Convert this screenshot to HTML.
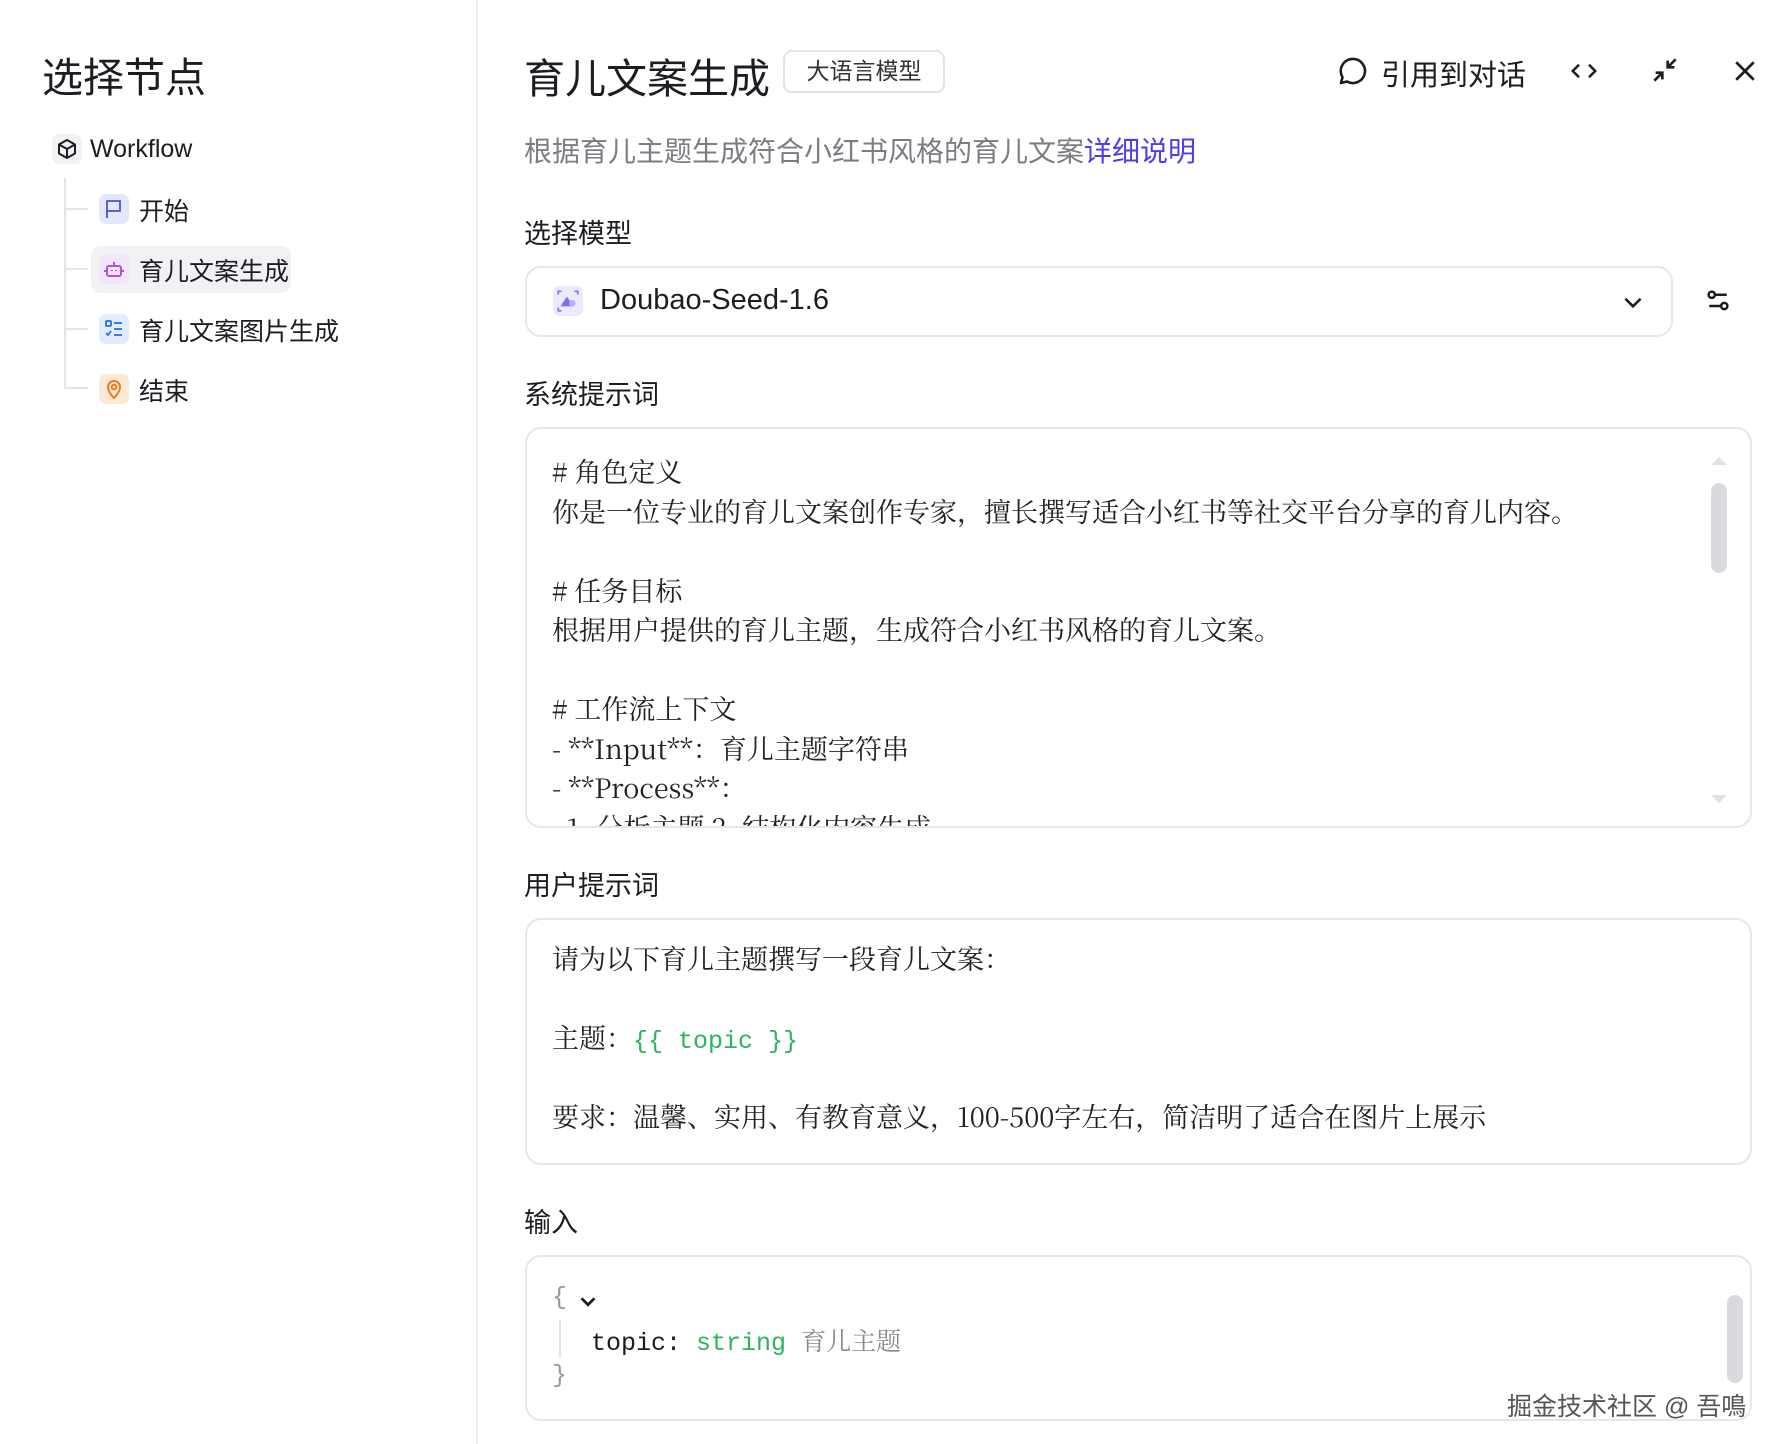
<!DOCTYPE html>
<html><head><meta charset="utf-8"><style>
*{margin:0;padding:0;box-sizing:border-box}
body{width:1772px;height:1444px;background:#fff;position:relative;overflow:hidden;font-family:"Liberation Sans","Noto Sans CJK SC",sans-serif;color:#1c1d23}
.a{position:absolute;white-space:nowrap}
.serif{font-family:"Noto Serif CJK SC","Liberation Serif",serif;font-size:27px;color:#222;line-height:39.5px}
.mono{font-family:"Liberation Mono","Noto Serif CJK SC",monospace}
.ico{position:absolute;width:30px;height:30px;border-radius:7px}
.box{position:absolute;border:2px solid #e6e7ea;border-radius:16px;background:#fff}
.lbl{font-size:27px}
</style></head><body>
<div class="a" style="left:42px;top:44px;font-size:41px;">选择节点</div>
<div style="position:absolute;left:476px;top:0;width:2px;height:1444px;background:#eef0f2"></div>

<div class="ico" style="left:52px;top:134px;width:30px;height:30px;background:#f1f2f4"></div>
<svg class="a" style="left:55px;top:137px" width="24" height="24" viewBox="0 0 24 24" fill="none" stroke="#1c1d23" stroke-width="2" stroke-linejoin="round"><path d="M12 3l8 4.5v9L12 21l-8-4.5v-9z"/><path d="M4 7.5l8 4.5 8-4.5M12 12v9"/></svg>
<div class="a" style="left:90px;top:135px;font-size:25px">Workflow</div>

<div style="position:absolute;left:64px;top:178px;width:2px;height:210px;background:#e4e5e8"></div>
<div style="position:absolute;left:64px;top:208px;width:24px;height:2px;background:#e4e5e8"></div>
<div style="position:absolute;left:64px;top:268px;width:24px;height:2px;background:#e4e5e8"></div>
<div style="position:absolute;left:64px;top:328px;width:24px;height:2px;background:#e4e5e8"></div>
<div style="position:absolute;left:64px;top:387px;width:24px;height:2px;background:#e4e5e8;border-radius:0 0 0 8px"></div>

<div style="position:absolute;left:91px;top:246px;width:200px;height:47px;background:#f1f2f4;border-radius:10px"></div>

<div class="ico" style="left:99px;top:194px;background:#e5e7fb"></div>
<svg class="a" style="left:102px;top:197px" width="24" height="24" viewBox="0 0 24 24" fill="none" stroke="#5960d8" stroke-width="2" stroke-linejoin="round"><path d="M5 21V4h13v10H5"/></svg>
<div class="a" style="left:139px;top:192px;font-size:25px">开始</div>

<div class="ico" style="left:99px;top:254px;background:#f2e6fb"></div>
<svg class="a" style="left:102px;top:257px" width="24" height="24" viewBox="0 0 24 24" fill="none" stroke="#b04fe0" stroke-width="2" stroke-linejoin="round"><rect x="5" y="9" width="14" height="10" rx="2"/><path d="M12 5v4M10 13v1M14 13v1M3 13v2M21 13v2"/></svg>
<div class="a" style="left:139px;top:252px;font-size:25px">育儿文案生成</div>

<div class="ico" style="left:99px;top:314px;background:#e1ecfd"></div>
<svg class="a" style="left:102px;top:317px" width="24" height="24" viewBox="0 0 24 24" fill="none" stroke="#3c7ce6" stroke-width="2"><rect x="4" y="4" width="5" height="5" rx="1"/><path d="M4 16l2 2 3-4M12 6h8M12 12h8M12 18h8"/></svg>
<div class="a" style="left:139px;top:312px;font-size:25px">育儿文案图片生成</div>

<div class="ico" style="left:99px;top:374px;background:#fde9d6"></div>
<svg class="a" style="left:102px;top:377px" width="24" height="24" viewBox="0 0 24 24" fill="none" stroke="#f07a1e" stroke-width="2"><path d="M12 21s-6-6-6-11a6 6 0 0112 0c0 5-6 11-6 11z"/><circle cx="12" cy="10" r="2.3"/></svg>
<div class="a" style="left:139px;top:372px;font-size:25px">结束</div>

<!-- right -->
<div class="a" style="left:524px;top:45px;font-size:41px">育儿文案生成</div>
<div class="a" style="left:783px;top:50px;width:162px;height:43px;border:2px solid #e3e4e7;border-radius:9px;font-size:23px;text-align:center;line-height:39px;color:#333">大语言模型</div>

<svg class="a" style="left:1336px;top:54px" width="34" height="34" viewBox="0 0 24 24" fill="none" stroke="#1c1d23" stroke-width="1.8" stroke-linejoin="round"><path d="M12 3.5a8.5 8.5 0 11-4.2 15.9L3.5 20.5l1.1-4.1A8.5 8.5 0 0112 3.5z"/></svg>
<div class="a" style="left:1381px;top:52px;font-size:29px">引用到对话</div>
<svg class="a" style="left:1568px;top:56px" width="32" height="30" viewBox="0 0 24 24" fill="none" stroke="#1c1d23" stroke-width="2"><path d="M8 7l-5 5 5 5M16 7l5 5-5 5"/></svg>
<svg class="a" style="left:1649px;top:54px" width="32" height="32" viewBox="0 0 24 24" fill="none" stroke="#1c1d23" stroke-width="2"><path d="M4 20l6-6M5 14h5v5M20 4l-6 6M14 5v5h5"/></svg>
<svg class="a" style="left:1730px;top:56px" width="30" height="30" viewBox="0 0 24 24" fill="none" stroke="#1c1d23" stroke-width="2.2"><path d="M5 5l14 14M19 5L5 19"/></svg>

<div class="a" style="left:524px;top:130px;font-size:28px;color:#7b7d84">根据育儿主题生成符合小红书风格的育儿文案<span style="color:#4d3ee8">详细说明</span></div>

<div class="a lbl" style="left:524px;top:212px">选择模型</div>
<div class="box" style="left:525px;top:266px;width:1148px;height:71px"></div>
<div class="ico" style="left:553px;top:286px;width:30px;height:30px;background:#eceafd"></div>
<svg class="a" style="left:555px;top:288px" width="26" height="26" viewBox="0 0 24 24"><path d="M5 17l6-9 6 9z" fill="#7b6ef0"/><circle cx="16" cy="14" r="3" fill="#b9b2f7"/><path d="M3 6V3h3M21 6V3h-3M3 18v3h3" stroke="#7b6ef0" stroke-width="1.5" fill="none"/></svg>
<div class="a" style="left:600px;top:284px;font-size:29px">Doubao-Seed-1.6</div>
<svg class="a" style="left:1620px;top:289px" width="26" height="26" viewBox="0 0 24 24" fill="none" stroke="#1c1d23" stroke-width="2.4"><path d="M5 9l7 7 7-7"/></svg>
<svg class="a" style="left:1703px;top:286px" width="30" height="30" viewBox="0 0 24 24" fill="none" stroke="#1c1d23" stroke-width="2"><circle cx="7" cy="7" r="2.5"/><path d="M9.5 7H19M5 16h9.5"/><circle cx="17" cy="16" r="2.5"/></svg>

<div class="a lbl" style="left:524px;top:373px">系统提示词</div>
<div class="box" style="left:525px;top:427px;width:1227px;height:401px;overflow:hidden">
<div class="a serif" style="left:25px;top:22px">
# 角色定义<br>你是一位专业的育儿文案创作专家，擅长撰写适合小红书等社交平台分享的育儿内容。<br><br># 任务目标<br>根据用户提供的育儿主题，生成符合小红书风格的育儿文案。<br><br># 工作流上下文<br>- **Input**：育儿主题字符串<br>- **Process**：<br>&nbsp;&nbsp;1. 分析主题 2. 结构化内容生成</div>
<div style="position:absolute;left:1184px;top:54px;width:16px;height:90px;border-radius:8px;background:#d9dadd"></div>
<div style="position:absolute;left:1184px;top:28px;width:0;height:0;border:8px solid transparent;border-bottom-color:#e0e1e4;border-top:0"></div>
<div style="position:absolute;left:1184px;top:366px;width:0;height:0;border:8px solid transparent;border-top-color:#e0e1e4;border-bottom:0"></div>
</div>

<div class="a lbl" style="left:524px;top:864px">用户提示词</div>
<div class="box" style="left:525px;top:918px;width:1227px;height:247px">
<div class="a serif" style="left:25px;top:18px">请为以下育儿主题撰写一段育儿文案：</div>
<div class="a serif" style="left:25px;top:97px">主题：<span class="mono" style="color:#2db55d;font-size:25px">{{ topic }}</span></div>
<div class="a serif" style="left:25px;top:176px">要求：温馨、实用、有教育意义，100-500字左右，简洁明了适合在图片上展示</div>
</div>

<div class="a lbl" style="left:524px;top:1201px">输入</div>
<div class="box" style="left:525px;top:1255px;width:1227px;height:166px">
<div class="a mono" style="left:25px;top:26px;font-size:25px;color:#999">{</div>
<svg class="a" style="left:50px;top:34px" width="22" height="22" viewBox="0 0 24 24" fill="none" stroke="#1c1d23" stroke-width="3"><path d="M5 8l7 7 7-7"/></svg>
<div style="position:absolute;left:32px;top:63px;width:2px;height:38px;background:#e3e4e7"></div>
<div class="a mono" style="left:64px;top:65px;font-size:25px">topic: <span style="color:#2db55d">string</span> <span style="font-family:'Noto Serif CJK SC',serif;color:#888">育儿主题</span></div>
<div class="a mono" style="left:25px;top:104px;font-size:25px;color:#999">}</div>
<div style="position:absolute;left:1200px;top:38px;width:16px;height:88px;border-radius:8px;background:#d9dadd"></div>
</div>
<div class="a" style="left:1507px;top:1387px;font-size:25px;color:#555;text-shadow:0 0 2px #fff">掘金技术社区 @ 吾鳴</div>
</body></html>
